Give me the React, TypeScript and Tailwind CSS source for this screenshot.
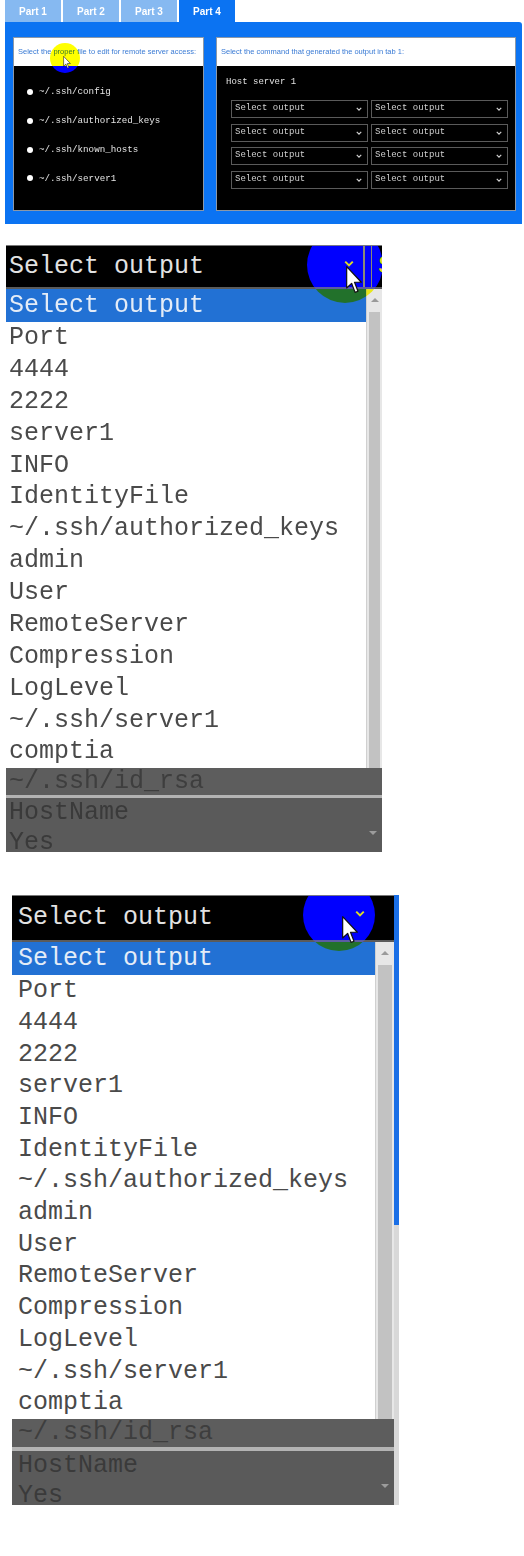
import React from "react";

const options = [
  "Port",
  "4444",
  "2222",
  "server1",
  "INFO",
  "IdentityFile",
  "~/.ssh/authorized_keys",
  "admin",
  "User",
  "RemoteServer",
  "Compression",
  "LogLevel",
  "~/.ssh/server1",
  "comptia",
];

const files = ["~/.ssh/config", "~/.ssh/authorized_keys", "~/.ssh/known_hosts", "~/.ssh/server1"];

function Cursor({ className }: { className: string }) {
  return (
    <svg viewBox="0 0 12 21" className={className}>
      <path
        d="M0.5 0.5 L0.5 16.5 L4.2 13 L6.8 19.8 L9 18.9 L6.4 12.2 L11.5 12.2 Z"
        fill="#fff"
        stroke="#111"
        strokeWidth="0.9"
        strokeLinejoin="round"
      />
    </svg>
  );
}

function Chevron({ className }: { className: string }) {
  return (
    <svg viewBox="0 0 8 5" className={className}>
      <polyline points="1,1 4,4 7,1" fill="none" stroke="currentColor" strokeWidth="1.6" />
    </svg>
  );
}

function SelectBox() {
  return (
    <div className="h-[18px] border border-[#5a5a5a] bg-black flex items-center justify-between pl-[3px] pr-[5px] font-['Liberation_Mono',monospace] text-[9px] text-[#d0d0d0]">
      <span>Select output</span>
      <Chevron className="w-[6px] h-[4px] text-[#cfcfcf]" />
    </div>
  );
}

function TopPanel() {
  return (
    <div className="relative w-[524px] h-[224px]">
      <div className="flex pl-[5px] gap-[2px] h-[22px]">
        {["Part 1", "Part 2", "Part 3"].map((t) => (
          <div
            key={t}
            className="w-[56px] h-[22px] bg-[#86b9f1] text-white font-bold text-[10px] font-['Liberation_Sans',Arial,sans-serif] flex items-center justify-center"
          >
            {t}
          </div>
        ))}
        <div className="w-[56px] h-[22px] bg-[#0b73f2] text-white font-bold text-[10px] font-['Liberation_Sans',Arial,sans-serif] flex items-center justify-center">
          Part 4
        </div>
      </div>
      <div className="ml-[5px] w-[517px] h-[202px] bg-[#0b73f2] rounded-tr-[3px] flex gap-[12px] pl-[8px] pt-[15px]">
        {/* left box */}
        <div className="w-[191px] h-[174px] border border-[#8b98a8] flex flex-col">
          <div className="h-[28px] bg-white flex items-center pl-[4px] text-[7.5px] text-[#3a7bd5] font-['Liberation_Sans',Arial,sans-serif] whitespace-nowrap">
            Select the proper file to edit for remote server access:
          </div>
          <div className="flex-1 bg-black flex flex-col pt-[12px] pl-[13px]">
            {files.map((f) => (
              <div key={f} className="h-[28.7px] flex items-center gap-[6px]">
                <span className="w-[6px] h-[6px] rounded-full bg-white" />
                <span className="font-['Liberation_Mono',monospace] text-[9.2px] text-[#e4e4e4]">{f}</span>
              </div>
            ))}
          </div>
        </div>
        {/* right box */}
        <div className="w-[300px] h-[174px] border border-[#8b98a8] flex flex-col">
          <div className="h-[28px] bg-white flex items-center pl-[4px] text-[7.5px] text-[#3a7bd5] font-['Liberation_Sans',Arial,sans-serif] whitespace-nowrap">
            Select the command that generated the output in tab 1:
          </div>
          <div className="flex-1 bg-black pt-[11px] pl-[9px]">
            <div className="h-[10px] leading-[10px] font-['Liberation_Mono',monospace] text-[9px] text-[#e0e0e0]">
              Host server 1
            </div>
            <div className="mt-[13px] pl-[5px] w-[282px] grid grid-cols-2 gap-x-[3px] gap-y-[5.5px]">
              {Array.from({ length: 8 }).map((_, i) => (
                <SelectBox key={i} />
              ))}
            </div>
          </div>
        </div>
      </div>
      {/* cursor highlight */}
      <div className="absolute left-[50px] top-[43px] w-[30px] h-[30px] rounded-full bg-[#0000ff] mix-blend-difference" />
      <Cursor className="absolute left-[63px] top-[56px] w-[8px] h-[13px]" />
    </div>
  );
}

function Dropdown({
  width,
  padLeft,
  headerH,
  rowH,
  idH,
  stripH,
  listW,
  scrollW,
  edge,
  circle,
  cursor,
}: {
  width: string;
  padLeft: string;
  headerH: string;
  rowH: string;
  idH: string;
  stripH: string;
  listW: string;
  scrollW: string;
  edge: boolean;
  circle: string;
  cursor: string;
}) {
  const mono = "font-['Liberation_Mono','Courier_New',monospace] text-[25px] whitespace-nowrap";
  return (
    <div className={`relative overflow-hidden ${width}`}>
      <div className="flex">
        <div className="flex-1 flex flex-col">
          {/* header */}
          <div className={`${headerH} bg-black flex items-center ${padLeft} border-t border-[#777] relative`}>
            <span className={`${mono} text-[#e2e2e2]`}>Select output</span>
            {!edge && (
              <>
                <span className="absolute left-[357px] top-0 bottom-0 w-[2px] bg-[#8a8a8a]" />
                <span className="absolute left-[365px] top-0 bottom-0 w-[1px] bg-[#8a8a8a]" />
                <span className={`absolute left-[372px] ${mono} text-[#e2e2e2]`}>S</span>
              </>
            )}
            <Chevron className={`absolute ${edge ? "left-[343px]" : "left-[338px]"} top-[14px] w-[10px] h-[7px] text-[#dddddd]`} />
          </div>
          <div className="h-[2px] bg-[#5b5b5b]" />
          {/* body */}
          <div className="flex">
            <div className={`${listW} flex flex-col bg-white`}>
              <div className={`h-[33px] bg-[#2271d4] flex items-center ${padLeft}`}>
                <span className={`${mono} text-[#e4ecf7]`}>Select output</span>
              </div>
              {options.map((o) => (
                <div key={o} className={`${rowH} flex items-center ${padLeft}`}>
                  <span className={`${mono} text-[#4a4a4a]`}>{o}</span>
                </div>
              ))}
            </div>
            <div className={`${scrollW} bg-[#e7e7e7] border-l border-[#d0d0d0] flex flex-col items-center pt-[9px]`}>
              <div className="w-0 h-0 border-l-[4px] border-r-[4px] border-b-[4px] border-l-transparent border-r-transparent border-b-[#9a9a9a]" />
              <div className="mt-[10px] w-[75%] flex-1 bg-[#c2c2c2]" />
            </div>
          </div>
          {/* gray footer */}
          <div className={`${idH} bg-[#5d5d5d] flex items-center ${padLeft}`}>
            <span className={`${mono} text-[#3e3e3e]`}>~/.ssh/id_rsa</span>
          </div>
          <div className={`${stripH} bg-[#b3b3b3]`} />
          <div className={`h-[54px] bg-[#5a5a5a] flex flex-col ${padLeft} relative overflow-hidden`}>
            <div className="h-[30px] flex items-center">
              <span className={`${mono} text-[#3a3a3a]`}>HostName</span>
            </div>
            <div className="h-[30px] flex items-center">
              <span className={`${mono} text-[#3a3a3a]`}>Yes</span>
            </div>
            <div className="absolute right-[5px] top-[33px] w-0 h-0 border-l-[4px] border-r-[4px] border-t-[4px] border-l-transparent border-r-transparent border-t-[#9c9c9c]" />
          </div>
        </div>
        {edge && (
          <div className="w-[5px] flex flex-col">
            <div className="h-[330px] bg-[#1a6fe6]" />
            <div className="flex-1 bg-[#d8d8d8]" />
          </div>
        )}
      </div>
      {/* cursor highlight */}
      <div className={`absolute rounded-full bg-[#0000ff] mix-blend-difference ${circle}`} />
      <Cursor className={`absolute w-[16px] h-[28px] ${cursor}`} />
    </div>
  );
}

export default function App() {
  return (
    <div className="w-[524px] h-[1556px] bg-white overflow-hidden">
      <TopPanel />
      <div className="mt-[21px] ml-[6px]">
        <Dropdown
          width="w-[376px]"
          padLeft="pl-[3px]"
          headerH="h-[42px]"
          rowH="h-[31.86px]"
          idH="h-[27px]"
          stripH="h-[3px]"
          listW="w-[360px]"
          scrollW="w-[16px]"
          edge={false}
          circle="left-[301px] top-[-18px] w-[76px] h-[76px]"
          cursor="left-[340px] top-[21px]"
        />
      </div>
      <div className="mt-[43px] ml-[12px]">
        <Dropdown
          width="w-[387px]"
          padLeft="pl-[6px]"
          headerH="h-[45px]"
          rowH="h-[31.71px]"
          idH="h-[28px]"
          stripH="h-[4px]"
          listW="w-[363px]"
          scrollW="w-[19px]"
          edge={true}
          circle="left-[291px] top-[-16px] w-[72px] h-[72px]"
          cursor="left-[330px] top-[21px]"
        />
      </div>
    </div>
  );
}
